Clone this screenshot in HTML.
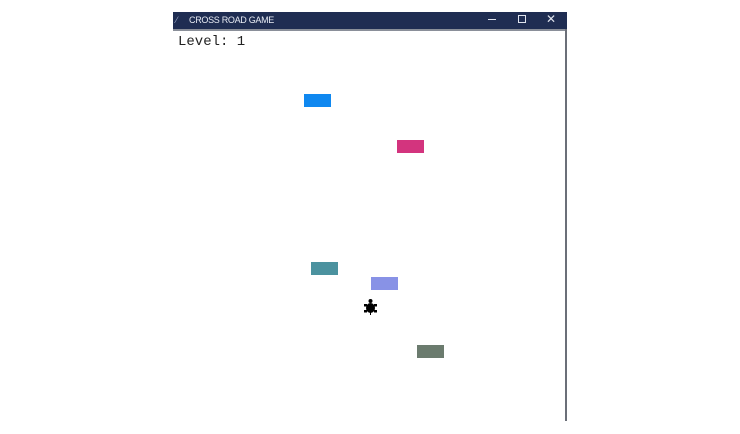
<!DOCTYPE html>
<html><head><style>
body{margin:0;width:740px;height:434px;background:#fff;position:relative;overflow:hidden;font-family:"Liberation Sans",sans-serif}
.r{position:absolute;width:27px;height:13px}
</style></head><body>
<div style="position:absolute;left:173px;top:12px;width:394px;height:17px;background:#1f2d52"></div>
<div style="position:absolute;left:176px;top:12px;color:#9aa6c4;font-size:9px;line-height:17px">⁄</div>
<div style="position:absolute;left:189px;top:12px;color:#e8ecf4;font-size:9px;line-height:17px;letter-spacing:-0.3px">CROSS ROAD GAME</div>
<div style="position:absolute;left:488px;top:19px;width:8px;height:1px;background:#e0e4ee"></div>
<div style="position:absolute;left:518px;top:15px;width:6px;height:6px;border:1px solid #e0e4ee"></div>
<div style="position:absolute;left:546px;top:11px;color:#e0e4ee;font-size:12px;line-height:17px">✕</div>
<div style="position:absolute;left:173px;top:29px;width:394px;height:2px;background:#8a8f99"></div>
<div style="position:absolute;left:565px;top:29px;width:2px;height:392px;background:#6b6f78"></div>
<div style="position:absolute;left:178px;top:34px;font-family:'Liberation Mono',monospace;font-size:14px;color:#222">Level: 1</div>
<div class="r" style="left:304px;top:94px;background:#0f88f0"></div>
<div class="r" style="left:397px;top:140px;background:#d3347e"></div>
<div class="r" style="left:311px;top:262px;background:#4b929f"></div>
<div class="r" style="left:371px;top:277px;background:#8892e6"></div>
<div class="r" style="left:417px;top:345px;background:#6b7b6e"></div>
<svg style="position:absolute;left:363px;top:298px" width="15" height="17" viewBox="0 0 15 17">
<ellipse cx="7.5" cy="10" rx="4.5" ry="5" fill="#000"/>
<circle cx="7.5" cy="3" r="2" fill="#000"/>
<rect x="1" y="6" width="3" height="2.5" fill="#000"/>
<rect x="11" y="6" width="3" height="2.5" fill="#000"/>
<rect x="1" y="12" width="3" height="2.5" fill="#000"/>
<rect x="11" y="12" width="3" height="2.5" fill="#000"/>
<rect x="7" y="14" width="1" height="3" fill="#000"/>
</svg>
</body></html>
